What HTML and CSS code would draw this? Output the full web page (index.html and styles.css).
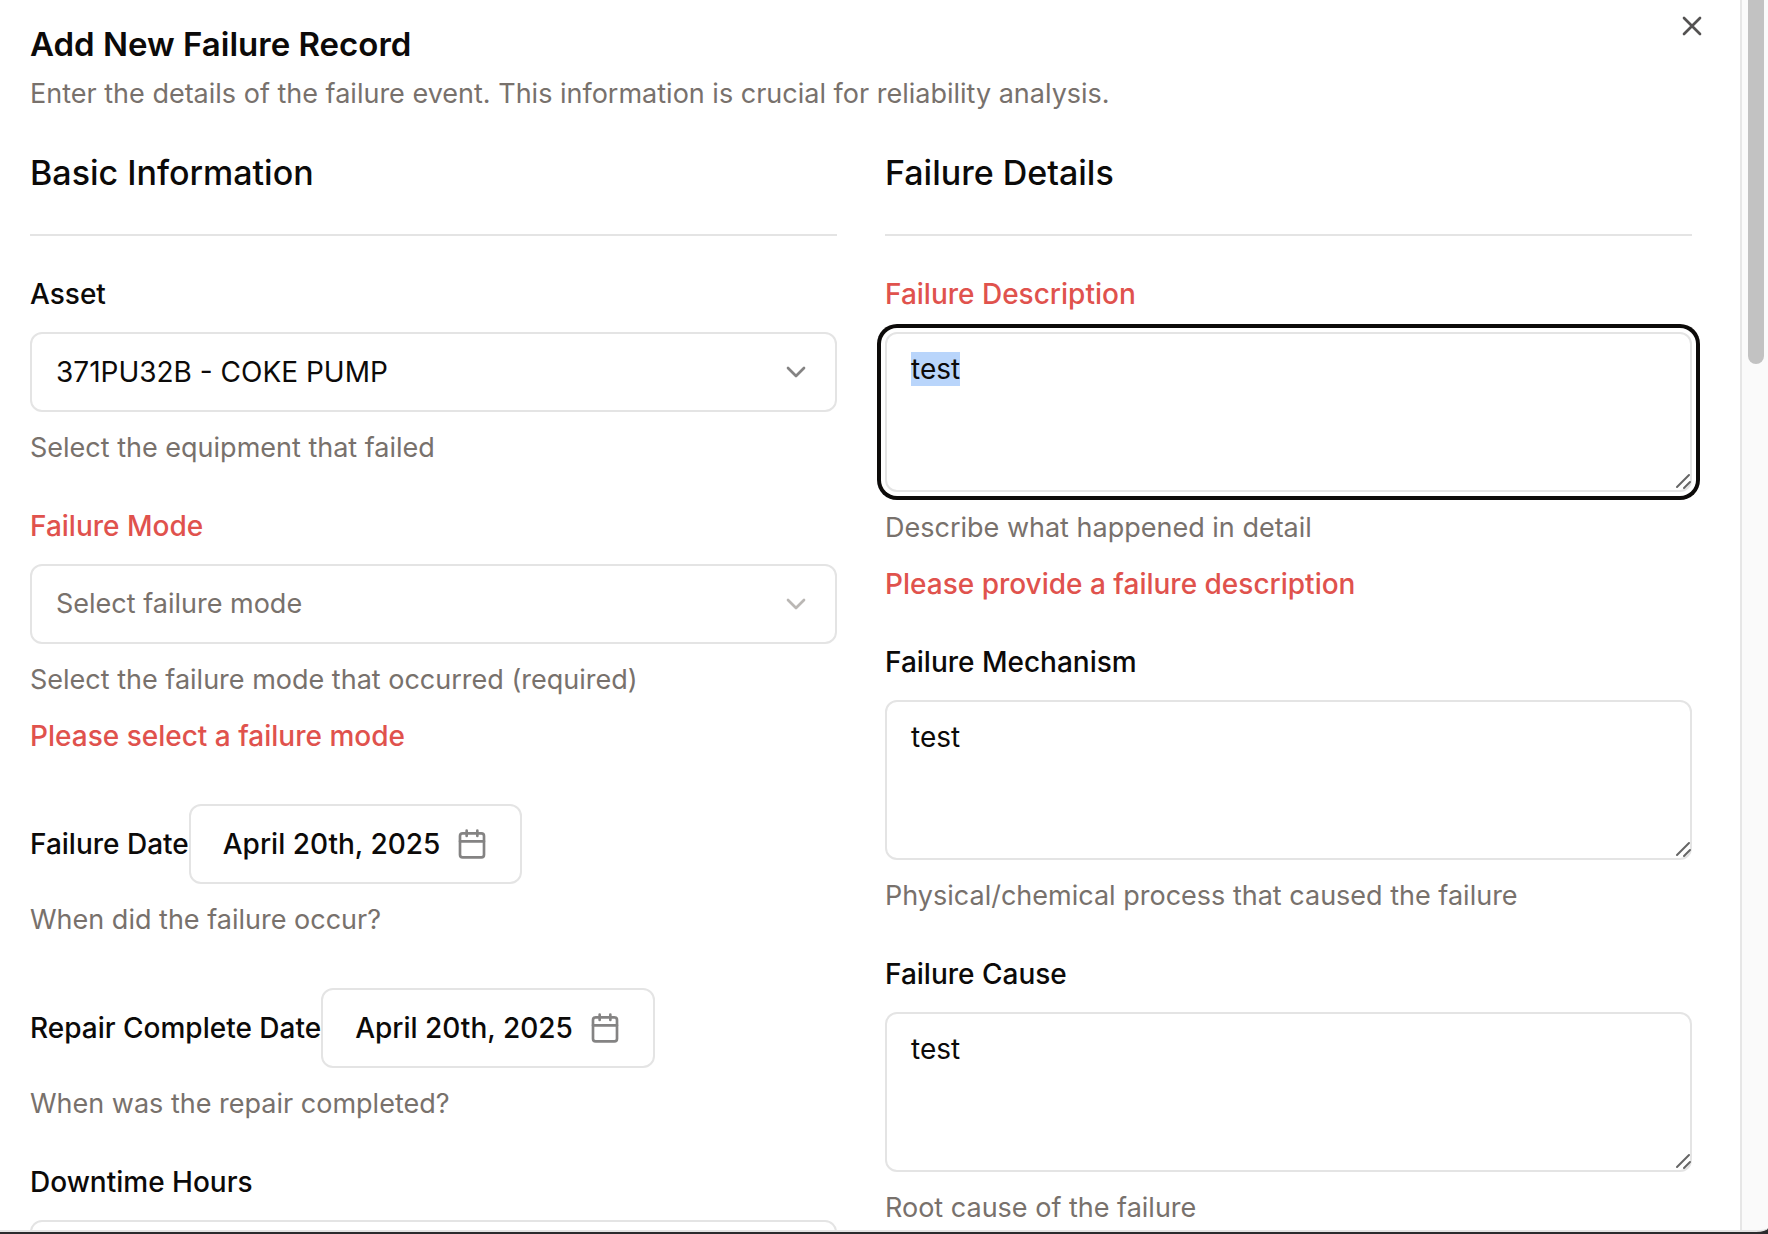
FILE: index.html
```html
<!DOCTYPE html>
<html lang="en">
<head>
<meta charset="utf-8">
<meta name="viewport" content="width=device-width, initial-scale=1">
<title>Add New Failure Record</title>
<link rel="stylesheet" href="styles.css">
</head>
<body>
<svg class="sprite" aria-hidden="true">
  <symbol id="chevron" viewBox="0 0 24 24"><path d="m6 9 6 6 6-6"/></symbol>
  <symbol id="calendar" viewBox="0 0 24 24"><path d="M8 2v4M16 2v4M3 10h18"/><rect x="3" y="4" width="18" height="18" rx="2"/></symbol>
  <symbol id="close" viewBox="0 0 24 24"><path d="M18 6 6 18M6 6l12 12"/></symbol>
  <symbol id="grip" viewBox="0 0 20 20"><path d="M5 15 17 3M12 16l6-6"/></symbol>
</svg>
<div class="window">
  <main class="dialog" role="dialog" aria-labelledby="dialog-title">
    <button class="close" type="button" aria-label="Close"><svg class="icon"><use href="#close"/></svg></button>
    <header class="dialog-header">
      <h1 class="dialog-title" id="dialog-title">Add New Failure Record</h1>
      <p class="hint">Enter the details of the failure event. This information is crucial for reliability analysis.</p>
    </header>
    <form class="columns">
      <section class="column">
        <h2 class="section-title">Basic Information</h2>
        <div class="field">
          <label class="label" for="asset">Asset</label>
          <div class="control">
            <select class="box select" id="asset"><option>371PU32B - COKE PUMP</option></select>
            <svg class="icon chevron"><use href="#chevron"/></svg>
          </div>
          <p class="hint">Select the equipment that failed</p>
        </div>
        <div class="field">
          <label class="label invalid" for="mode">Failure Mode</label>
          <div class="control empty">
            <select class="box select" id="mode"><option>Select failure mode</option></select>
            <svg class="icon chevron"><use href="#chevron"/></svg>
          </div>
          <p class="hint">Select the failure mode that occurred (required)</p>
          <p class="error">Please select a failure mode</p>
        </div>
        <div class="field">
          <div class="date-row">
            <label class="date-label" for="failure-date">Failure Date</label>
            <button class="box date" id="failure-date" type="button">April 20th, 2025<svg class="icon"><use href="#calendar"/></svg></button>
          </div>
          <p class="hint">When did the failure occur?</p>
        </div>
        <div class="field">
          <div class="date-row">
            <label class="date-label" for="repair-date">Repair Complete Date</label>
            <button class="box date" id="repair-date" type="button">April 20th, 2025<svg class="icon"><use href="#calendar"/></svg></button>
          </div>
          <p class="hint">When was the repair completed?</p>
        </div>
        <div class="field">
          <label class="label" for="downtime">Downtime Hours</label>
          <input class="box" id="downtime" type="text">
        </div>
      </section>
      <section class="column">
        <h2 class="section-title">Failure Details</h2>
        <div class="field">
          <label class="label invalid" for="description">Failure Description</label>
          <div class="control">
            <textarea class="box area" id="description">test</textarea>
            <svg class="grip"><use href="#grip"/></svg>
          </div>
          <p class="hint">Describe what happened in detail</p>
          <p class="error">Please provide a failure description</p>
        </div>
        <div class="field">
          <label class="label" for="mechanism">Failure Mechanism</label>
          <div class="control">
            <textarea class="box area" id="mechanism">test</textarea>
            <svg class="grip"><use href="#grip"/></svg>
          </div>
          <p class="hint">Physical/chemical process that caused the failure</p>
        </div>
        <div class="field">
          <label class="label" for="cause">Failure Cause</label>
          <div class="control">
            <textarea class="box area" id="cause">test</textarea>
            <svg class="grip"><use href="#grip"/></svg>
          </div>
          <p class="hint">Root cause of the failure</p>
        </div>
      </section>
    </form>
  </main>
  <div class="scrollbar"><div class="thumb"></div></div>
</div>
<script src="script.js"></script>
</body>
</html>
```
FILE: styles.css
```css
* { box-sizing: border-box; }
body {
  margin: 0;
  background: #2b2b2d;
  color: #0c0a09;
  font: 400 28px/40px Inter, "Liberation Sans", sans-serif;
}
h1, h2, p { margin: 0; }
button, input, select, textarea { font: inherit; color: inherit; }
.sprite { position: absolute; width: 0; height: 0; }

.window {
  display: flex;
  height: calc(100vh - 2px);
  overflow: hidden;
  background: #fafafa;
  border-bottom: 2px solid #e4e4e4;
  border-bottom-right-radius: 12px 4px;
}
.dialog {
  position: relative;
  flex: 1;
  padding: 26px 48px 0 30px;
  background: #fff;
  border-right: 2px solid #e6e6e6;
}
.scrollbar { width: 26px; padding: 0 4px 0 6px; }
.thumb { height: 30vh; max-height: 364px; background: #c2c2c2; border-radius: 0 0 8px 8px; }

.icon {
  width: 32px;
  height: 32px;
  flex: none;
  fill: none;
  stroke: currentColor;
  stroke-width: 2;
  stroke-linecap: round;
  stroke-linejoin: round;
}
.close {
  position: absolute;
  top: 10px;
  right: 32px;
  display: flex;
  padding: 0;
  border: 0;
  background: none;
  opacity: .7;
}

.dialog-header { display: flex; flex-direction: column; gap: 12px; margin-bottom: 32px; }
.dialog-title { font-size: 33px; font-weight: 600; line-height: 36px; }
.section-title {
  padding-bottom: 34px;
  border-bottom: 2px solid #e4e4e4;
  font-size: 34px;
  font-weight: 500;
  line-height: 54px;
}
.columns { display: grid; grid-template-columns: 1fr 1fr; gap: 48px; }
.column { display: flex; flex-direction: column; gap: 48px; min-width: 0; }
.field { display: flex; flex-direction: column; gap: 16px; }
.label { align-self: flex-start; margin-bottom: 12px; font-weight: 500; line-height: 20px; }
.hint { color: #78716c; font-size: 27px; }
.invalid, .error { color: #e0524d; }
.error { font-weight: 500; }

.control { position: relative; display: flex; }
.box {
  width: 100%;
  height: 80px;
  padding: 0 24px;
  background: #fff;
  border: 2px solid #e4e4e4;
  border-radius: 12px;
  outline: none;
}
.select { appearance: none; }
.chevron { position: absolute; right: 25px; top: 24px; opacity: .5; pointer-events: none; }
.empty { color: #78716c; font-size: 27px; }
.area { display: block; height: 160px; padding: 18px 24px; line-height: 34px; resize: none; overflow: hidden; }
.area:focus { box-shadow: 0 0 0 4px #fff, 0 0 0 8px #0c0a09; }
.area::selection { background: #b9d5fb; color: #0c0a09; }
.grip {
  position: absolute;
  right: 0;
  bottom: 0;
  width: 20px;
  height: 20px;
  fill: none;
  stroke: #666;
  stroke-width: 2;
  stroke-linecap: round;
  pointer-events: none;
}

.date-row { display: flex; align-items: center; }
.date-label { font-weight: 500; white-space: nowrap; }
.date { display: flex; align-items: center; gap: 16px; width: auto; padding: 0 32px; font-weight: 500; white-space: nowrap; }
.date .icon { opacity: .5; }
```
FILE: script.js
```js
const description = document.getElementById("description");
description.focus();
description.select();
```
